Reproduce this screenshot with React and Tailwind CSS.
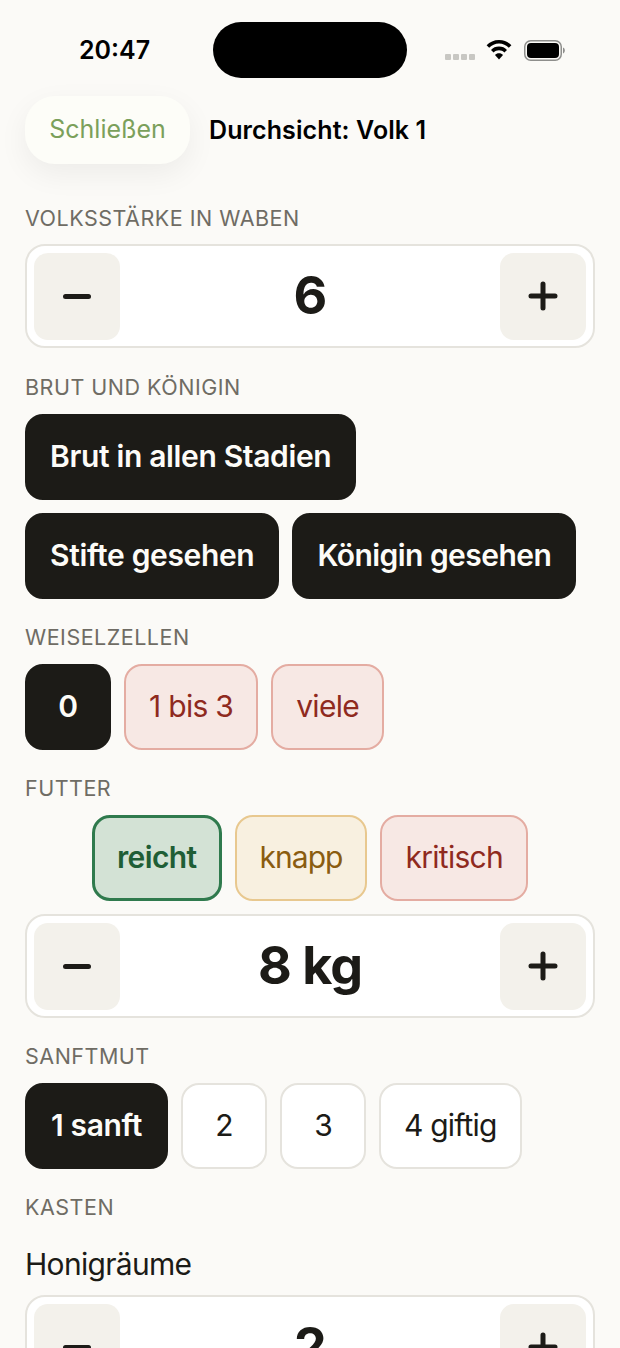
const font = "[font-family:Inter,'Liberation_Sans',sans-serif]";

function Label({ children, first }) {
  return (
    <div className={`h-[28px] text-[21.5px] leading-[28px] tracking-[0.5px] text-[#6f6c64] ${first ? "mb-[12px]" : "mb-[13px]"}`}>
      {children}
    </div>
  );
}

function Pill({ children, tone = "plain", width = "min-w-[86px]" }) {
  const tones = {
    dark: "bg-[#1c1b17] text-[#fdfcf8] font-semibold tracking-[-0.35px] border-2 border-[#1c1b17] px-[23px]",
    plain: "bg-white text-[#1c1b17] tracking-[-0.8px] border-2 border-[#e5e3dd] px-[23px]",
    red: "bg-[#f7e8e4] text-[#8f2a1e] tracking-[-0.7px] border-2 border-[#e4aca2] px-[23px]",
    amber: "bg-[#f8f0e0] text-[#8a5c10] tracking-[-1px] border-2 border-[#e8c88f] px-[23px]",
    green: "bg-[#d3e2d5] text-[#1f5e36] font-semibold tracking-[-0.6px] border-[3px] border-[#2f7a4d] px-[22px]",
  };
  return (
    <div className={`h-[86px] ${width} pb-[1px] flex items-center justify-center rounded-[18px] text-[30px] ${tones[tone]}`}>
      {children}
    </div>
  );
}

function Stepper({ value }) {
  return (
    <div className="h-[104px] rounded-[20px] border-2 border-[#e5e3dd] bg-white px-[7px] flex items-center justify-between">
      <div className="w-[86px] h-[87px] rounded-[14px] bg-[#f3f1eb] flex items-center justify-center">
        <div className="w-[28px] h-[5px] rounded-full bg-[#1c1b17]" />
      </div>
      <div className="text-[52px] font-bold tracking-[-1px] text-[#1c1b17] leading-none">{value}</div>
      <div className="w-[86px] h-[87px] rounded-[14px] bg-[#f3f1eb] flex items-center justify-center">
        <svg width="30" height="30" viewBox="0 0 30 30" fill="none" stroke="#1c1b17" strokeWidth="5" strokeLinecap="round">
          <path d="M15 3v24M3 15h24" />
        </svg>
      </div>
    </div>
  );
}

export default function App() {
  return (
    <div className={`h-[1348px] w-[620px] overflow-hidden bg-[#fbfaf7] ${font}`}>
      <div className="h-[96px] pt-[22px] flex">
        <div className="w-[213px] h-[56px] pl-[79px] pt-[1px] flex items-center text-[25px] font-semibold text-black">20:47</div>
        <div className="w-[194px] h-[56px] rounded-full bg-black" />
        <div className="flex-1 h-[56px] flex items-center pl-[38px]">
          <div className="flex gap-[2px] mt-[14px]">
            <div className="w-[6px] h-[6px] rounded-[1px] bg-[#c8c7c3]" />
            <div className="w-[6px] h-[6px] rounded-[1px] bg-[#c8c7c3]" />
            <div className="w-[6px] h-[6px] rounded-[1px] bg-[#c8c7c3]" />
            <div className="w-[6px] h-[6px] rounded-[1px] bg-[#c8c7c3]" />
          </div>
          <svg className="ml-[11px]" width="26" height="20" viewBox="0 0 26 20">
            <path d="M13 0C8 0 3.8 2 0.6 5.2l2.6 2.6C5.8 5.2 9.2 3.6 13 3.6s7.2 1.6 9.8 4.2l2.6-2.6C22.2 2 18 0 13 0z" fill="#000" />
            <path d="M13 6.6c-3.2 0-6 1.2-8 3.3l2.6 2.6c1.4-1.4 3.3-2.3 5.4-2.3s4 .9 5.4 2.3l2.6-2.6c-2-2.1-4.8-3.3-8-3.3z" fill="#000" />
            <path d="M13 13.2c-1.6 0-3 .6-4 1.7L13 19.4l4-4.5c-1-1.1-2.4-1.7-4-1.7z" fill="#000" />
          </svg>
          <svg className="ml-[12px]" width="41" height="21" viewBox="0 0 41 21">
            <rect x="0.75" y="0.75" width="36.5" height="19.5" rx="6" fill="none" stroke="#8e8e8c" strokeWidth="1.5" />
            <rect x="3" y="3" width="32" height="15" rx="4" fill="#000" />
            <path d="M39 7.5c1.2.4 1.8 1.6 1.8 3s-.6 2.6-1.8 3z" fill="#8e8e8c" />
          </svg>
        </div>
      </div>

      <div className="px-[25px]">
        <div className="flex items-center gap-[19px] h-[68px] mb-[40px]">
          <div className="h-[68px] w-[165px] rounded-[30px] bg-[#fdfdf8] shadow-[0_10px_30px_rgba(0,0,0,0.06)] flex items-center justify-center text-[25px] text-[#7ba05b]">
            Schließen
          </div>
          <div className="pt-[1px] text-[25px] font-semibold tracking-[0.1px] text-black">Durchsicht: Volk 1</div>
        </div>

        <Label first>VOLKSSTÄRKE IN WABEN</Label>
        <Stepper value="6" />

        <div className="mt-[25px]">
          <Label>BRUT UND KÖNIGIN</Label>
          <div className="flex flex-wrap gap-[13px]">
            <Pill tone="dark">Brut in allen Stadien</Pill>
            <div className="w-full flex gap-[13px]">
              <Pill tone="dark">Stifte gesehen</Pill>
              <Pill tone="dark"><span className="tracking-[-0.55px]">Königin gesehen</span></Pill>
            </div>
          </div>
        </div>

        <div className="mt-[24px]">
          <Label>WEISELZELLEN</Label>
          <div className="flex gap-[13px]">
            <Pill tone="dark">0</Pill>
            <Pill tone="red">1 bis 3</Pill>
            <Pill tone="red">viele</Pill>
          </div>
        </div>

        <div className="mt-[24px]">
          <Label>FUTTER</Label>
          <div className="flex justify-center gap-[13px] mb-[13px]">
            <Pill tone="green">reicht</Pill>
            <Pill tone="amber">knapp</Pill>
            <Pill tone="red">kritisch</Pill>
          </div>
          <Stepper value="8 kg" />
        </div>

        <div className="mt-[24px]">
          <Label>SANFTMUT</Label>
          <div className="flex gap-[13px]">
            <Pill tone="dark" width="w-[143px]">1 sanft</Pill>
            <Pill>2</Pill>
            <Pill>3</Pill>
            <Pill>4 giftig</Pill>
          </div>
        </div>

        <div className="mt-[24px]">
          <div className="h-[28px] text-[21.5px] leading-[28px] tracking-[0.5px] text-[#6f6c64]">KASTEN</div>
          <div className="mt-[26px] mb-[13px] h-[35px] leading-[35px] text-[30px] tracking-[-0.7px] text-[#1c1b17]">Honigräume</div>
          <Stepper value="2" />
        </div>
      </div>
    </div>
  );
}
